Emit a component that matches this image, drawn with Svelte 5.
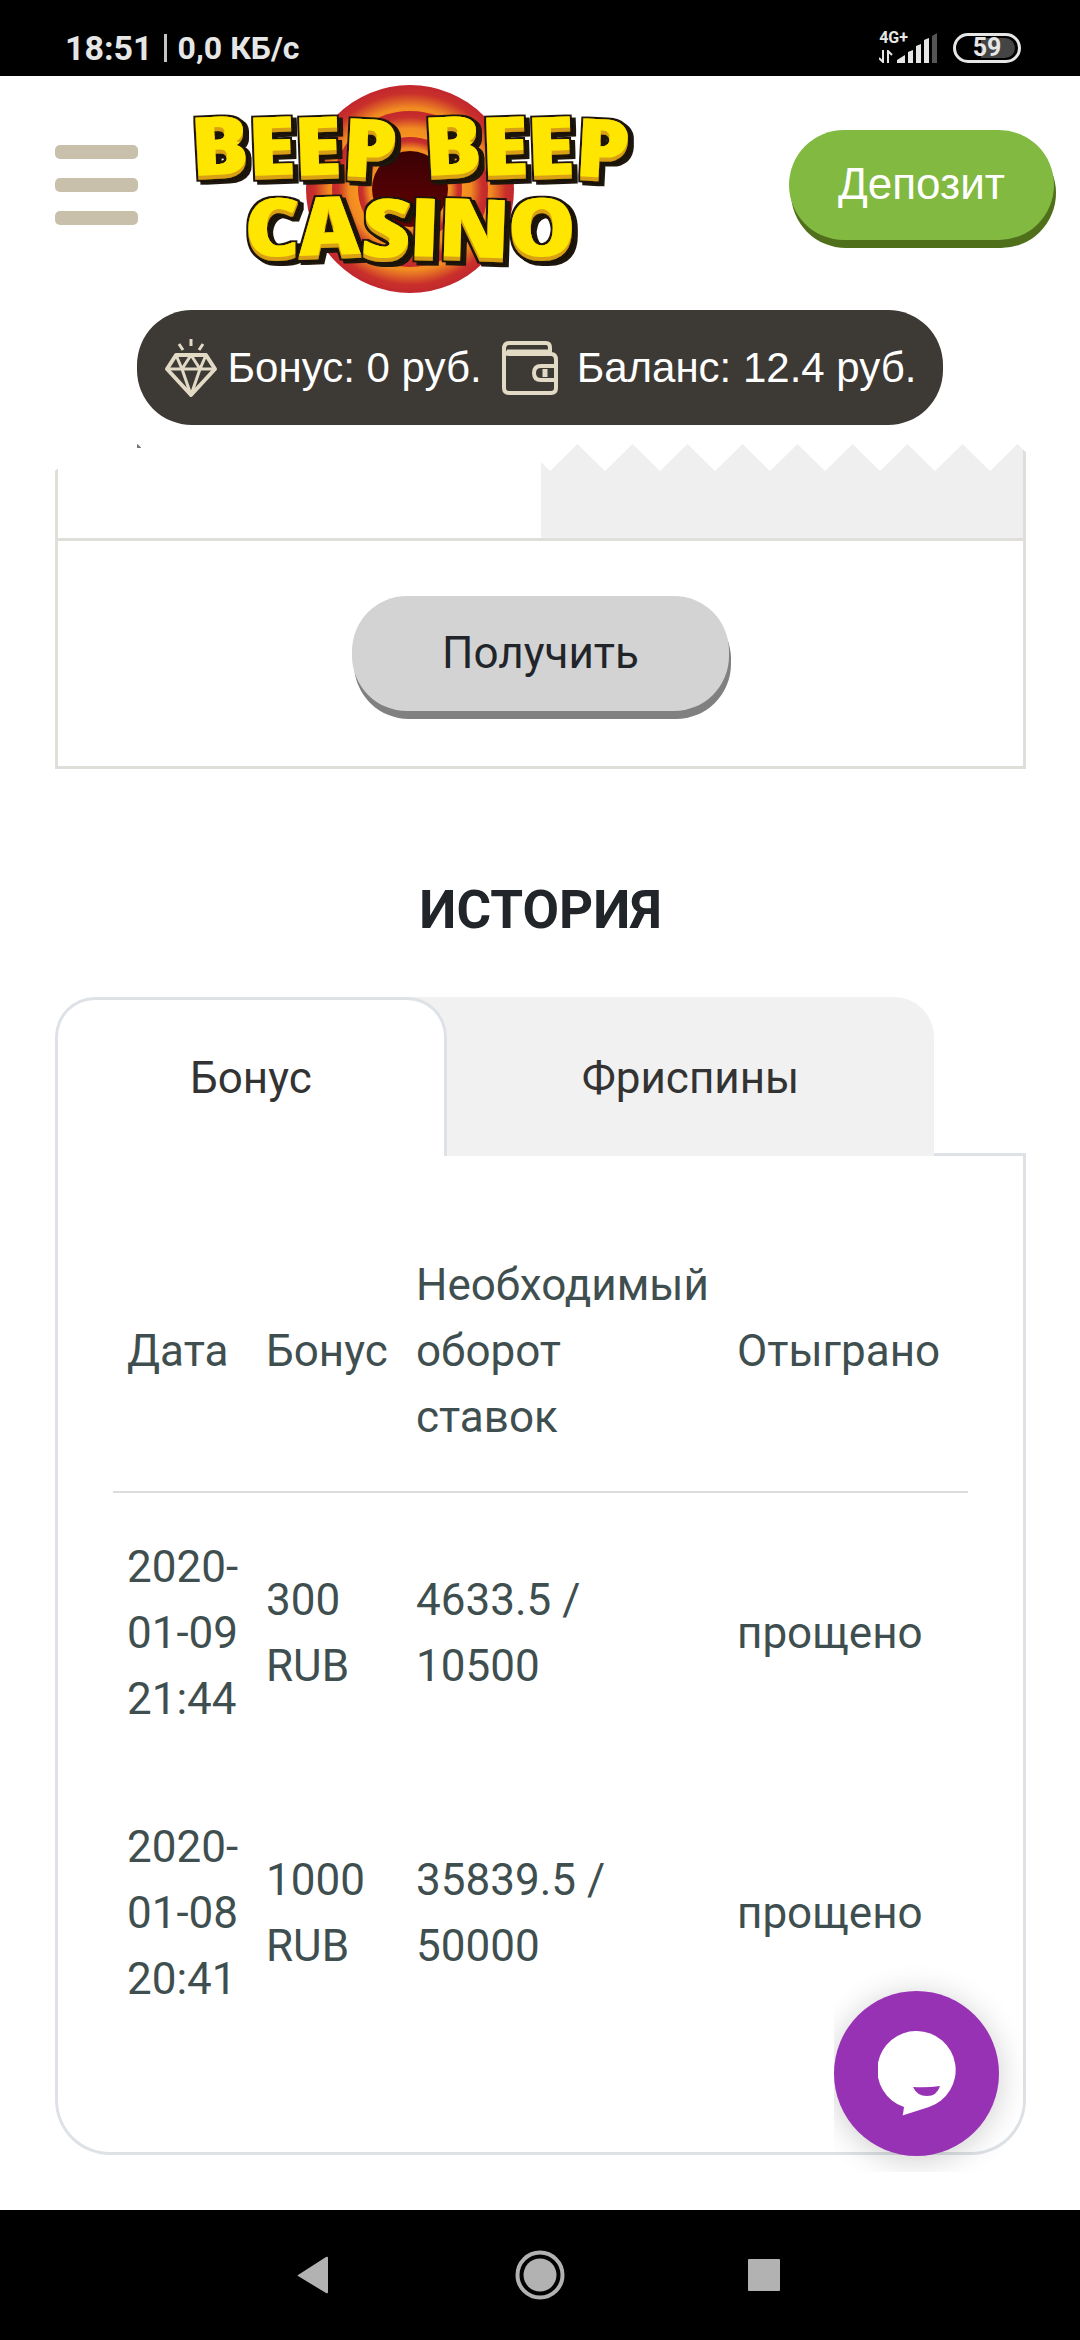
<script lang="ts">
	let activeTab = $state('bonus');

	const tabs = [
		{ id: 'bonus', label: 'Бонус' },
		{ id: 'freespins', label: 'Фриспины' }
	];

	const history = [
		{ date: '2020-01-09 21:44', bonus: '300 RUB', wager: '4633.5 / 10500', status: 'прощено' },
		{ date: '2020-01-08 20:41', bonus: '1000 RUB', wager: '35839.5 / 50000', status: 'прощено' }
	];
</script>

<div class="screen">
	<!-- Phone status bar -->
	<div class="status-bar">
		<div class="status-left">
			<span class="clock">18:51</span>
			<span class="divider"></span>
			<span class="speed">0,0 КБ/с</span>
		</div>
		<div class="status-right">
			<div class="network">
				<span>4G+</span>
				<svg width="14" height="13" viewBox="0 0 14 13" fill="none" stroke="#e6e6e6" stroke-width="2">
					<path d="M4 0v12L0 8" />
					<path d="M9 13V1l4 4" />
				</svg>
			</div>
			<svg class="signal" width="41" height="30" viewBox="0 0 41 30" fill="#e6e6e6">
				<path d="M0 30v-3l8-5v8z" />
				<path d="M11 30V19l5-2v13z" />
				<path d="M19 30V13l5-2v19z" />
				<path d="M27 30V7l5-2v25z" />
				<path d="M35 30V3l5-3v30z" fill="#555" />
			</svg>
			<div class="battery"><span>59</span></div>
		</div>
	</div>

	<!-- Site header -->
	<header class="site-header">
		<div class="header-row">
			<button class="menu" aria-label="Меню">
				<i></i>
				<i></i>
				<i></i>
			</button>
			<a class="logo" href="/" aria-label="Beep Beep Casino">
				<svg width="446" height="218" viewBox="0 -7 446 218">
					<defs>
						<radialGradient id="ring">
							<stop offset="0.68" stop-color="#f7931e" />
							<stop offset="0.78" stop-color="#f08a22" />
							<stop offset="0.92" stop-color="#c9302b" />
							<stop offset="1" stop-color="#c1272d" />
						</radialGradient>
						<linearGradient id="hole" x2="0" y2="1">
							<stop offset="0" stop-color="#3a0206" />
							<stop offset="1" stop-color="#660000" />
						</linearGradient>
						<filter id="letters" x="-5%" y="-20%" width="112%" height="140%">
							<feMorphology in="SourceAlpha" operator="dilate" radius="1" result="fat" />
							<feMorphology in="SourceAlpha" operator="dilate" radius="3" result="outline" />
							<feFlood flood-color="#1c130a" />
							<feComposite in2="outline" operator="in" result="black" />
							<feOffset in="black" dx="4" dy="3" result="shade" />
							<feFlood flood-color="#d9a012" />
							<feComposite in2="fat" operator="in" result="gold" />
							<feOffset in="fat" dy="-4" result="up" />
							<feFlood flood-color="#ffe600" />
							<feComposite in2="up" operator="in" />
							<feComposite in2="fat" operator="in" result="face" />
							<feMerge>
								<feMergeNode in="shade" />
								<feMergeNode in="black" />
								<feMergeNode in="gold" />
								<feMergeNode in="face" />
							</feMerge>
						</filter>
					</defs>
					<circle cx="221" cy="106" r="104" fill="url(#ring)" />
					<circle cx="221" cy="106" r="78" fill="url(#ring)" />
					<circle cx="221" cy="106" r="52" fill="url(#ring)" />
					<circle cx="221" cy="106" r="38" fill="url(#hole)" />
					<g class="logo-text" filter="url(#letters)">
						<text x="105" y="96" rotate="-3 -2 -2 3">BEEP</text>
						<text x="338" y="96" rotate="-3 -2 -2 3">BEEP</text>
						<text x="221" y="176" rotate="0 -2 3 2 2 0">CASINO</text>
					</g>
				</svg>
			</a>
			<button class="deposit">Депозит</button>
		</div>

		<div class="wallet-bar">
			<svg class="gem" width="54" height="60" viewBox="0 0 54 60" fill="none" stroke="#e3dac6" stroke-width="4" stroke-linejoin="round">
				<path d="M27 1v7M15 6l4 6M39 6l-4 6" stroke-width="3" />
				<path d="M12 17h30l9 14-24 26L3 31z" />
				<path d="M3 31h48M12 17l6 14 9-14 9 14 6-14M18 31l9 26 9-26" stroke-width="3" />
			</svg>
			<span>Бонус: 0 руб.</span>
			<svg class="purse" width="56" height="54" viewBox="0 0 56 54" fill="none" stroke="#e3dac6" stroke-width="4" stroke-linejoin="round">
				<path d="M2 7v40q0 5 5 5h42q5 0 5-5V19q0-6-5-6H7q-5 0-5-5 0-6 5-6h37q4 0 4 5v6" />
				<path d="M5 10h41" stroke-width="3" />
				<path d="M54 25H39q-7 0-7 7t7 7h15" />
				<path d="M43 28v8" stroke-width="5" />
			</svg>
			<span>Баланс: 12.4 руб.</span>
		</div>

		<!-- torn lower edge that hangs over the scrolled content -->
		<svg class="torn-edge" width="100%" height="27">
			<defs>
				<pattern id="teeth" width="55" height="27" patternUnits="userSpaceOnUse">
					<path d="M0 0v27L27.5 0 55 27V0z" fill="#fff" />
				</pattern>
			</defs>
			<rect width="100%" height="27" fill="url(#teeth)" />
		</svg>
	</header>

	<main>
		<section class="offer">
			<div class="offer-row">
				<div class="offer-cell"><i class="scrap"></i></div>
				<div class="offer-cell filled"></div>
			</div>
			<div class="offer-action">
				<button class="claim">Получить</button>
			</div>
		</section>

		<h2>ИСТОРИЯ</h2>

		<div class="tabs" role="tablist">
			{#each tabs as tab}
				<button
					role="tab"
					class="tab"
					class:active={activeTab === tab.id}
					aria-selected={activeTab === tab.id}
					onclick={() => (activeTab = tab.id)}
				>
					{tab.label}
				</button>
			{/each}
		</div>

		<section class="panel">
			<table>
				<thead>
					<tr>
						<th class="col-date">Дата</th>
						<th class="col-bonus">Бонус</th>
						<th class="col-wager">Необходимый оборот ставок</th>
						<th>Отыграно</th>
					</tr>
				</thead>
				<tbody>
					{#each history as row}
						<tr>
							<td>{row.date}</td>
							<td>{row.bonus}</td>
							<td>{row.wager}</td>
							<td>{row.status}</td>
						</tr>
					{/each}
				</tbody>
			</table>
		</section>

		<div class="chat-frame">
			<button class="chat" aria-label="Чат">
				<svg width="78" height="86" viewBox="0 0 78 86">
					<path
						d="M39 0a39 39 0 0 1 12 76L26 84q-2 1-1-1l1-7A39 39 0 0 1 39 0z"
						fill="#fff"
					/>
					<path d="M35 56q14 1 27-1-3 10-13 10T35 56z" fill="#9832b5" />
				</svg>
			</button>
		</div>
	</main>

	<!-- Phone navigation -->
	<nav class="phone-nav">
		<button aria-label="Назад">
			<svg width="50" height="50" viewBox="0 0 50 50">
				<path d="M7 25 35 7q2-1 2 1v34q0 2-2 1L7 26q-1 0 0-1z" fill="#b2b2b2" />
			</svg>
		</button>
		<button aria-label="Домой">
			<svg width="50" height="50" viewBox="0 0 50 50">
				<circle cx="25" cy="25" r="22.5" fill="none" stroke="#b2b2b2" stroke-width="4" />
				<circle cx="25" cy="25" r="16.5" fill="#b2b2b2" />
			</svg>
		</button>
		<button aria-label="Недавние">
			<svg width="50" height="50" viewBox="0 0 50 50">
				<rect x="9" y="9" width="32" height="32" rx="1" fill="#b2b2b2" />
			</svg>
		</button>
	</nav>
</div>

<style>
	:global(body) {
		background: #fff;
	}

	.screen {
		font-family: Roboto, 'Noto Sans', sans-serif;
		font-size: 44px;
		line-height: 66px;
		color: #212529;
	}

	button {
		border: none;
		background: none;
		padding: 0;
		font: inherit;
		color: inherit;
		cursor: pointer;
	}

	svg {
		display: block;
		flex: none;
	}

	/* Status bar */
	.status-bar {
		display: flex;
		justify-content: space-between;
		align-items: flex-end;
		height: 76px;
		box-sizing: border-box;
		padding: 0 59px 8px 65px;
		background: #000;
		color: #e6e6e6;
		font-size: 32px;
		font-weight: 700;
		line-height: 40px;
	}

	.status-left {
		display: flex;
		align-items: center;
	}

	.clock {
		font-size: 34px;
	}

	.divider {
		width: 3px;
		height: 28px;
		margin: 0 11px;
		background: #c4c4c4;
	}

	.status-right {
		display: flex;
		align-items: flex-end;
		padding-bottom: 5px;
	}

	.network {
		display: flex;
		flex-direction: column;
		gap: 5px;
		font-size: 16px;
		line-height: 14px;
	}

	.signal {
		margin-left: -11px;
	}

	.battery {
		display: flex;
		align-items: center;
		justify-content: center;
		width: 68px;
		height: 30px;
		box-sizing: border-box;
		margin-left: 15px;
		border: 3px solid #e6e6e6;
		border-radius: 15px;
		padding: 3px;
		font-size: 25px;
		line-height: 20px;
	}

	.battery span {
		width: 100%;
		border-radius: 10px;
		text-align: center;
		background: linear-gradient(90deg, #000 40%, #444 40%);
	}

	/* Header */
	.site-header {
		position: relative;
		z-index: 1;
		background: #fff;
		padding-bottom: 19px;
	}

	.header-row {
		display: flex;
		align-items: center;
		padding: 0 26px 16px 55px;
	}

	.menu {
		display: flex;
		flex-direction: column;
		gap: 19px;
		width: 83px;
	}

	.menu i {
		height: 14px;
		border-radius: 5px;
		background: #c9c0ac;
	}

	.logo {
		margin-left: 51px;
	}

	.logo-text {
		font-family: 'Open Sans', sans-serif;
		font-size: 84px;
		font-weight: 800;
		text-anchor: middle;
	}

	.deposit {
		height: 110px;
		margin-left: auto;
		padding: 0 49px 2px;
		border-radius: 55px;
		background: #82b941;
		box-shadow: 2px 8px 0 #4f6f1b;
		color: #fff;
		font-family: 'Liberation Sans', Arial, sans-serif;
	}

	.wallet-bar {
		display: flex;
		align-items: center;
		width: fit-content;
		height: 115px;
		box-sizing: border-box;
		margin: 0 auto;
		padding: 0 27px;
		border-radius: 55px;
		background: #3d3935;
		color: #fff;
		font-family: 'Liberation Sans', Arial, sans-serif;
		font-size: 42px;
	}

	.gem {
		margin-right: 10px;
	}

	.purse {
		margin: 0 19px 0 20px;
	}

	.torn-edge {
		position: absolute;
		top: 100%;
		left: 0;
	}

	/* Offer */
	main {
		position: relative;
		padding: 0 54px 55px 55px;
	}

	.offer {
		border: 3px solid #e0ded9;
		border-top: none;
	}

	.offer-row {
		display: flex;
		height: 94px;
		border-bottom: 3px solid #e0ded9;
	}

	.offer-cell {
		flex: 1;
	}

	.offer-cell.filled {
		background: #efefef;
	}

	.scrap {
		display: block;
		width: 4px;
		height: 4px;
		margin-left: 79px;
		background: #777;
	}

	.offer-action {
		display: flex;
		justify-content: center;
		padding: 55px 0;
	}

	.claim {
		height: 115px;
		padding: 0 90px 2px;
		border-radius: 55px;
		background: #d3d3d3;
		box-shadow: 2px 8px 0 #808080;
	}

	h2 {
		margin: 108px 0 54px;
		font-size: 53px;
		font-weight: 700;
		text-align: center;
	}

	/* Tabs */
	.tabs {
		display: flex;
		border-bottom: 3px solid #dee2e6;
	}

	.tab {
		height: 159px;
		margin-bottom: -3px;
		padding: 0 132px;
		border: 3px solid #f1f1f1;
		border-bottom: none;
		border-radius: 0 40px 0 0;
		background: #f1f1f1;
		color: #333;
	}

	.tab.active {
		position: relative;
		border-color: #dee2e6;
		border-radius: 40px 40px 0 0;
		background: #fff;
	}

	/* keeps the grey of the next tab behind the rounded corner */
	.tab.active + .tab {
		margin-left: -40px;
		padding-left: 172px;
	}

	.panel {
		border: 3px solid #dee2e6;
		border-top: none;
		border-radius: 0 0 55px 55px;
		padding: 55px 55px 99px;
	}

	table {
		width: 100%;
		table-layout: fixed;
		border-collapse: collapse;
		color: #3f4f4f;
	}

	th, td {
		padding: 41px 10px 41px 14px;
		font-weight: 400;
		text-align: left;
		vertical-align: middle;
	}

	thead tr {
		border-bottom: 2px solid #dcdcdc;
	}

	.col-date {
		width: 115px;
	}

	.col-bonus {
		width: 126px;
	}

	.col-wager {
		width: 297px;
	}

	/* the amount goes under its slash */
	td:nth-child(3) {
		padding-right: 40px;
	}

	/* Chat */
	.chat-frame {
		position: absolute;
		right: 54px;
		bottom: 38px;
		padding: 40px 27px 16px 0;
		overflow: hidden;
	}

	.chat {
		display: flex;
		align-items: center;
		justify-content: center;
		width: 165px;
		height: 165px;
		border-radius: 50%;
		background: #9832b5;
		box-shadow: 0 4px 32px rgba(0, 0, 0, 0.2);
	}

	/* Phone navigation */
	.phone-nav {
		display: flex;
		justify-content: center;
		gap: 174px;
		padding: 40px 0;
		background: #000;
	}
</style>
